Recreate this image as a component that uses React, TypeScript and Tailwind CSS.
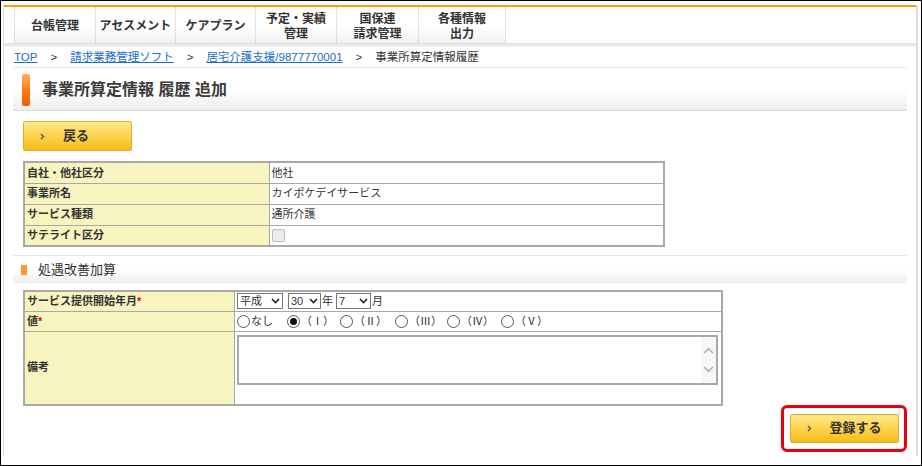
import React from 'react'

const tabs: { lines: string[]; w: string }[] = [
  { lines: ['台帳管理'], w: 'w-[81px]' },
  { lines: ['アセスメント'], w: 'w-[80px]' },
  { lines: ['ケアプラン'], w: 'w-[80px]' },
  { lines: ['予定・実績', '管理'], w: 'w-[81px]' },
  { lines: ['国保連', '請求管理'], w: 'w-[82px]' },
  { lines: ['各種情報', '出力'], w: 'w-[87px]' },
]

const radios = [
  { label: 'なし', w: 'w-[50px]', on: false },
  { label: '（Ⅰ）', w: 'w-[53px]', on: true },
  { label: '（Ⅱ）', w: 'w-[55px]', on: false },
  { label: '（Ⅲ）', w: 'w-[52px]', on: false },
  { label: '（Ⅳ）', w: 'w-[54px]', on: false },
  { label: '（Ⅴ）', w: 'w-[54px]', on: false },
]

const Chevron = () => (
  <svg width="5" height="7" viewBox="0 0 5 7" className="shrink-0">
    <path d="M1 1 L3.5 3.5 L1 6" fill="none" stroke="#555" strokeWidth="1.4" />
  </svg>
)

const SelectBox = ({ value, w }: { value: string; w: string }) => (
  <span className={`flex h-[16px] ${w} items-center justify-between border border-[#777] bg-white pl-[2px] pr-[2px] leading-none`}>
    <span>{value}</span>
    <svg width="9" height="6" viewBox="0 0 9 6">
      <path d="M1 1 L4.5 4.5 L8 1" fill="none" stroke="#222" strokeWidth="1.6" />
    </svg>
  </span>
)

const YellowButton = ({ label, w }: { label: string; w: string }) => (
  <button
    type="button"
    className={`flex ${w} items-center rounded-[2px] border border-[#dcae34] bg-gradient-to-b from-[#ffe98a] via-[#fdd34a] to-[#f7bd0c] text-[13px] font-bold text-[#333]`}
  >
    <span className="ml-[16px] mr-[18px] flex">
      <Chevron />
    </span>
    {label}
  </button>
)

export default function App() {
  return (
    <div className="h-[466px] w-[922px] overflow-hidden border border-black bg-white pl-[2px] pr-[3px] pt-[4px] font-['Liberation_Sans','Noto_Sans_CJK_JP',sans-serif] text-[11px] text-[#333]">
      <div className="flex h-[451px] flex-col border-l border-r-2 border-[#dedede]">
        {/* top nav */}
        <div className="h-[2px] bg-[#ff9d12]" />
        <div className="flex h-[36px] pl-[10px]">
          {tabs.map((t, i) => (
            <div
              key={i}
              className={`flex ${t.w} flex-col items-center justify-center border-l border-dotted border-[#c8c8c8] bg-gradient-to-b from-white via-white to-[#f1f1f1] pt-[3px] text-[12px] font-bold leading-[15px] text-[#333]`}
            >
              {t.lines.map((l) => (
                <span key={l}>{l}</span>
              ))}
            </div>
          ))}
          <div className="border-l border-dotted border-[#c8c8c8]" />
        </div>
        <div className="h-[4px] bg-gradient-to-b from-[#dedede] to-[#f4f4f4]" />

        <div className="flex flex-1 flex-col px-[9px]">
          {/* breadcrumb */}
          <div className="flex h-[21px] items-center border-b border-[#e4e4e4] pl-[1px] pt-[1px] text-[11.5px]">
            <a className="text-[#1a6ec9] underline">TOP</a>
            <span className="mx-[13px]">&gt;</span>
            <a className="text-[#1a6ec9] underline">請求業務管理ソフト</a>
            <span className="mx-[13px]">&gt;</span>
            <a className="text-[#1a6ec9] underline">居宅介護支援/9877770001</a>
            <span className="mx-[13px]">&gt;</span>
            <span>事業所算定情報履歴</span>
          </div>

          {/* title */}
          <div className="mt-[1px] flex h-[42px] items-center border-b border-[#dcdcdc] bg-gradient-to-b from-white via-white to-[#ededed]">
            <div className="ml-[9px] h-[32px] w-[8px] rounded-[2px] bg-gradient-to-b from-[#ffb060] via-[#ff7a10] to-[#f06000]" />
            <h1 className="ml-[12px] text-[16px] font-bold text-[#3a3a3a]">事業所算定情報 履歴 追加</h1>
          </div>

          <div className="ml-[10px] mt-[10px] flex h-[30px]">
            <YellowButton label="戻る" w="w-[109px]" />
          </div>

          {/* basic info */}
          <table className="ml-[10px] mt-[10px] w-[642px] border-collapse border-2 border-[#a8a8a8]">
            <tbody>
              {[
                ['自社・他社区分', '他社'],
                ['事業所名', 'カイポケデイサービス'],
                ['サービス種類', '通所介護'],
                ['サテライト区分', ''],
              ].map(([k, v], i) => (
                <tr key={k} className="h-[21px]">
                  <th className="w-[245px] border border-[#a8a8a8] bg-[#f8f4bf] pl-[2px] text-left font-bold">{k}</th>
                  <td className="border border-[#a8a8a8] pl-[2px]">
                    {i === 3 ? (
                      <span className="block h-[13px] w-[13px] rounded-[2px] border border-[#bdbdbd] bg-[#ececec]" />
                    ) : (
                      v
                    )}
                  </td>
                </tr>
              ))}
            </tbody>
          </table>

          {/* section header */}
          <div className="mt-[8px] flex h-[28px] items-center border-t border-[#e8e8e8] bg-gradient-to-b from-white via-white to-[#eeeeee]">
            <div className="ml-[8px] h-[10px] w-[6px] bg-[#ff9a2a]" />
            <h2 className="ml-[11px] text-[13px] text-[#333]">処遇改善加算</h2>
          </div>

          {/* form */}
          <table className="ml-[10px] mt-[7px] w-[700px] border-collapse border-2 border-[#a8a8a8]">
            <tbody>
              <tr className="h-[20px]">
                <th className="w-[213px] border border-[#a8a8a8] bg-[#f8f4bf] pl-[2px] text-left font-bold">
                  サービス提供開始年月<span className="text-[#e00]">*</span>
                </th>
                <td className="border border-[#a8a8a8] pl-[2px]">
                  <div className="flex items-center">
                    <SelectBox value="平成" w="w-[46px]" />
                    <span className="ml-[5px]" />
                    <SelectBox value="30" w="w-[33px]" />
                    <span className="ml-[1px]">年</span>
                    <span className="ml-[3px]" />
                    <SelectBox value="7" w="w-[35px]" />
                    <span className="ml-[1px]">月</span>
                  </div>
                </td>
              </tr>
              <tr className="h-[20px]">
                <th className="border border-[#a8a8a8] bg-[#f8f4bf] pl-[2px] text-left font-bold">
                  値<span className="text-[#e00]">*</span>
                </th>
                <td className="border border-[#a8a8a8] pl-[2px]">
                  <div className="flex items-center">
                    {radios.map((r) => (
                      <span key={r.label} className={`flex ${r.w} items-center`}>
                        <span className="flex h-[13px] w-[13px] items-center justify-center rounded-full border border-[#555] bg-white">
                          {r.on && <span className="h-[7px] w-[7px] rounded-full bg-[#111]" />}
                        </span>
                        <span className="ml-[1px]">{r.label}</span>
                      </span>
                    ))}
                  </div>
                </td>
              </tr>
              <tr className="h-[73px]">
                <th className="border border-[#a8a8a8] bg-[#f8f4bf] pl-[2px] text-left font-bold">備考</th>
                <td className="border border-[#a8a8a8] pb-[19px] pl-[2px] pr-[3px] pt-[3px] align-top">
                  <div className="flex h-[50px] w-[481px] justify-end border-2 border-[#a8a8a8] bg-white">
                    <div className="flex w-[15px] flex-col items-center justify-center gap-[12px] bg-[#f7f7f7]">
                      <svg width="11" height="7" viewBox="0 0 11 7">
                        <path d="M1 6 L5.5 1.5 L10 6" fill="none" stroke="#aaa" strokeWidth="1.4" />
                      </svg>
                      <svg width="11" height="7" viewBox="0 0 11 7">
                        <path d="M1 1 L5.5 5.5 L10 1" fill="none" stroke="#aaa" strokeWidth="1.4" />
                      </svg>
                    </div>
                  </div>
                </td>
              </tr>
            </tbody>
          </table>

          {/* submit */}
          <div className="mt-[-1px] flex justify-end">
            <div className="flex h-[47px] w-[126px] items-center justify-center rounded-[6px] border-[3px] border-[#e8000b]">
              <div className="flex h-[29px]">
                <YellowButton label="登録する" w="w-[109px]" />
              </div>
            </div>
          </div>
        </div>
      </div>
    </div>
  )
}
